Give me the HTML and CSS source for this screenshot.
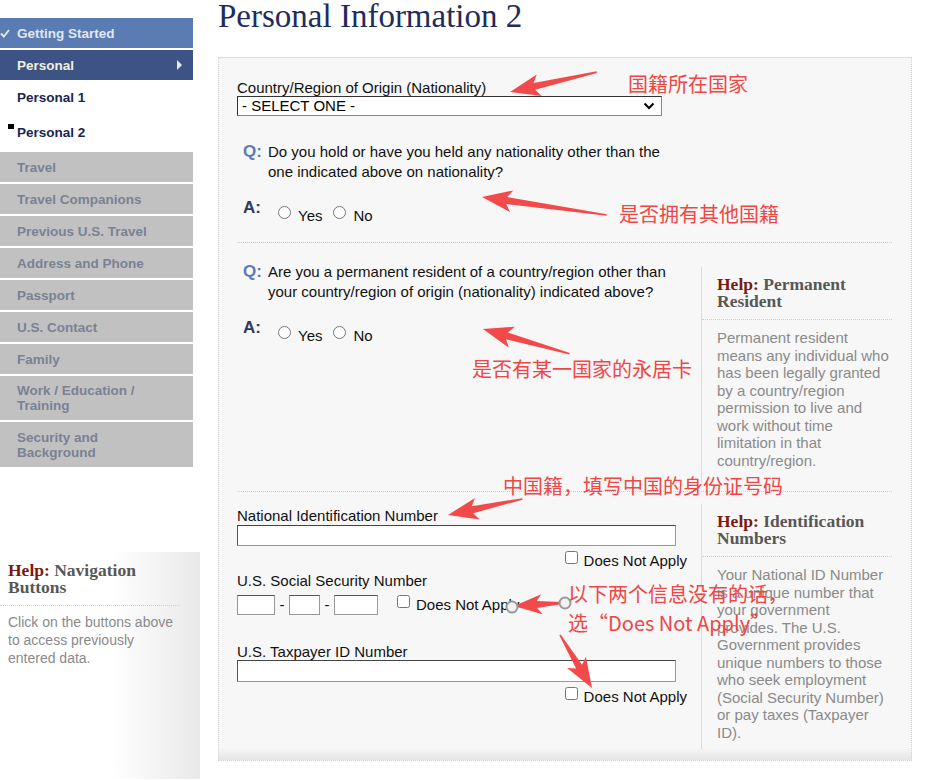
FILE: index.html
```html
<!DOCTYPE html>
<html lang="en">
<head>
    <meta charset="UTF-8">
    <meta name="viewport" content="width=device-width, initial-scale=1.0">
    <title>Personal Information 2</title>
    <link rel="stylesheet" href="styles.css">
</head>
<body>
    <div class="page">
        <aside class="sidebar">
            <ul class="nav">
                <li class="nav-item done">
                    <svg class="check" width="10" height="9" viewBox="0 0 10 9"><path d="M1 4.5 L3.8 7.5 L9 1" /></svg>
                    Getting Started
                </li>
                <li class="nav-item current">Personal<span class="caret"></span></li>
                <li class="sub-item">Personal 1</li>
                <li class="sub-item active">Personal 2</li>
                <li class="nav-item locked">Travel</li>
                <li class="nav-item locked">Travel Companions</li>
                <li class="nav-item locked">Previous U.S. Travel</li>
                <li class="nav-item locked">Address and Phone</li>
                <li class="nav-item locked">Passport</li>
                <li class="nav-item locked">U.S. Contact</li>
                <li class="nav-item locked">Family</li>
                <li class="nav-item locked tall">Work / Education /<br>Training</li>
                <li class="nav-item locked tall">Security and<br>Background</li>
            </ul>

            <div class="help-nav">
                <h3 class="help-title"><span class="help-tag">Help:</span> Navigation Buttons</h3>
                <p class="help-text">Click on the buttons above to access previously entered data.</p>
            </div>
        </aside>

        <main class="main">
            <h1 class="page-title">Personal Information 2</h1>

            <form class="form-box">
                <!-- nationality -->
                <section class="block first">
                    <label class="field-label">Country/Region of Origin (Nationality)</label>
                    <div class="select-wrap">
                        <select class="select-wide"><option>- SELECT ONE -</option></select>
                        <svg class="chevron" width="12" height="8" viewBox="0 0 12 8"><path d="M1.5 1.5 L6 6 L10.5 1.5" /></svg>
                    </div>

                    <div class="q-row"><span class="q-mark">Q:</span><span class="q-text">Do you hold or have you held any nationality other than the one indicated above on nationality?</span></div>
                    <div class="a-row">
                        <span class="a-mark">A:</span>
                        <div class="options">
                            <label class="option"><input type="radio" name="other_nat"><span>Yes</span></label>
                            <label class="option"><input type="radio" name="other_nat"><span>No</span></label>
                        </div>
                    </div>
                </section>

                <!-- permanent resident -->
                <section class="block split second">
                    <div class="fields">
                        <div class="q-row"><span class="q-mark">Q:</span><span class="q-text">Are you a permanent resident of a country/region other than your country/region of origin (nationality) indicated above?</span></div>
                        <div class="a-row">
                            <span class="a-mark">A:</span>
                            <div class="options">
                                <label class="option"><input type="radio" name="perm_res"><span>Yes</span></label>
                                <label class="option"><input type="radio" name="perm_res"><span>No</span></label>
                            </div>
                        </div>
                    </div>
                    <div class="help help-resident">
                        <h3 class="help-title"><span class="help-tag">Help:</span> Permanent Resident</h3>
                        <p class="help-text">Permanent resident means any individual who has been legally granted by a country/region permission to live and work without time limitation in that country/region.</p>
                    </div>
                </section>

                <!-- id numbers -->
                <section class="block split third">
                    <div class="fields id-fields">
                        <label class="field-label">National Identification Number</label>
                        <input class="text-wide" type="text">
                        <label class="na-row"><input type="checkbox"><span>Does Not Apply</span></label>

                        <label class="field-label ssn-label">U.S. Social Security Number</label>
                        <div class="ssn-row">
                            <input class="ssn ssn-1" type="text">
                            <span class="dash">-</span>
                            <input class="ssn ssn-2" type="text">
                            <span class="dash">-</span>
                            <input class="ssn ssn-3" type="text">
                            <label class="na-inline"><input type="checkbox"><span>Does Not Apply</span></label>
                        </div>

                        <label class="field-label tax-label">U.S. Taxpayer ID Number</label>
                        <input class="text-wide tax-input" type="text">
                        <label class="na-row"><input type="checkbox"><span>Does Not Apply</span></label>
                    </div>
                    <div class="help help-ids">
                        <h3 class="help-title"><span class="help-tag">Help:</span> Identification Numbers</h3>
                        <p class="help-text">Your National ID Number is a unique number that your government provides. The U.S. Government provides unique numbers to those who seek employment (Social Security Number) or pay taxes (Taxpayer ID).</p>
                    </div>
                </section>
            </form>
        </main>
    </div>

    <!-- red annotations drawn over the screenshot -->
    <div class="notes">
        <svg class="arrows" width="930" height="780" viewBox="0 0 930 780">
            <line x1="512" y1="607" x2="565" y2="603" stroke="#9a9a9a" stroke-width="2" />
            <g class="arrow" transform="translate(510,92) rotate(-12.9)"><polygon points="0,0 30,-11 25,-3.5 89,-0.8 89,0.8 25,3.5 30,11" /></g>
            <g class="arrow" transform="translate(482,197) rotate(8.2)"><polygon points="0,0 30,-11 25,-3.5 126,-0.8 126,0.8 25,3.5 30,11" /></g>
            <g class="arrow" transform="translate(483,329) rotate(16)"><polygon points="0,0 30,-11 25,-3.5 90,-0.8 90,0.8 25,3.5 30,11" /></g>
            <g class="arrow" transform="translate(448,515) rotate(-12.2)"><polygon points="0,0 30,-11 25,-3.5 76,-0.8 76,0.8 25,3.5 30,11" /></g>
            <g class="arrow" transform="translate(514,606) rotate(-3.6)"><polygon points="0,0 28,-10 23,-3.5 48,-1 48,1 23,3.5 28,10" /></g>
            <g class="arrow" transform="translate(592,688) rotate(-121.1)"><polygon points="0,0 30,-11 25,-3.5 62,-0.8 62,0.8 25,3.5 30,11" /></g>
            <circle cx="512" cy="607" r="5.5" fill="#f3f3f3" stroke="#9a9a9a" stroke-width="2" />
            <circle cx="565" cy="603" r="5.5" fill="#f3f3f3" stroke="#9a9a9a" stroke-width="2" />
        </svg>
        <span class="note note-origin">国籍所在国家</span>
        <span class="note note-other">是否拥有其他国籍</span>
        <span class="note note-resident">是否有某一国家的永居卡</span>
        <span class="note note-id">中国籍，填写中国的身份证号码</span>
        <span class="note note-na1">以下两个信息没有的话，</span>
        <span class="note note-na2">选“Does Not Apply”</span>
    </div>
</body>
</html>
```

FILE: styles.css
```css
body {
    margin: 0;
    background: #fff;
    color: #111;
    font-family: "Liberation Sans", Arial, sans-serif;
    overflow: hidden;
}

.page {
    display: flex;
    width: 930px;
}

/* ---------- left navigation ---------- */

.sidebar {
    width: 200px;
    flex: none;
    padding-top: 18px;
}

.nav {
    list-style: none;
    margin: 0;
    padding: 0;
    width: 193px;
}

.nav-item {
    position: relative;
    box-sizing: border-box;
    height: 30px;
    margin-bottom: 2px;
    padding-left: 17px;
    display: flex;
    align-items: center;
    font: bold 13.5px/15px "Liberation Sans", Arial, sans-serif;
}

.nav-item.tall { height: 44px; }
.nav-item.tall:last-child { height: 45px; margin-bottom: 0; }

.done {
    background: #5b7bb3;
    color: #e2e7f0;
}

.check {
    position: absolute;
    left: 0;
    top: 11px;
}

.check path {
    fill: none;
    stroke: #dfe5ef;
    stroke-width: 2;
}

.current {
    background: #3e5385;
    color: #f3efdc;
    margin-bottom: 0;
}

.caret {
    position: absolute;
    right: 11px;
    top: 10px;
    border-left: 5px solid #e3e7ee;
    border-top: 5px solid transparent;
    border-bottom: 5px solid transparent;
}

.sub-item {
    position: relative;
    height: 35px;
    padding-left: 17px;
    display: flex;
    align-items: center;
    font: bold 13.5px/15px "Liberation Sans", Arial, sans-serif;
    color: #1b2552;
}

.sub-item.active { margin-bottom: 2px; }

.sub-item.active::before {
    content: "";
    position: absolute;
    left: 8px;
    top: 9px;
    width: 6px;
    height: 5px;
    background: #000;
}

.locked {
    background: #c1c1c1;
    color: #7a8195;
}

.help-nav {
    margin-top: 85px;
    height: 227px;
    box-sizing: border-box;
    padding: 10px 0 0 8px;
    background: linear-gradient(to right, #fff 55%, #e9e9e9 100%);
}

.help-nav .help-title {
    width: 172px;
    margin-left: -8px;
    padding-left: 8px;
}

.help-nav .help-text {
    width: 167px;
    margin-top: 7px;
    font-size: 14px;
    line-height: 18px;
}

/* ---------- help boxes ---------- */

.help-title {
    margin: 0;
    padding-bottom: 9px;
    border-bottom: 1px dotted #cfcfcf;
    font: bold 17.5px/17px "Liberation Serif", Georgia, serif;
    color: #575757;
}

.help-tag { color: #7b1a10; }

.help-text {
    margin: 9px 0 0;
    font-size: 15px;
    line-height: 17.5px;
    color: #8a8a8a;
}

.help {
    width: 191px;
    box-sizing: border-box;
    border-left: 1px solid #dcdcdc;
    padding-top: 9px;
}

.help .help-title { padding-left: 15px; }
.help .help-text { padding-left: 15px; }

.help-resident {
    margin-top: 24px;
    padding-bottom: 14px;
}

.help-ids {
    margin-top: 12px;
    padding-bottom: 8px;
}

/* ---------- main column ---------- */

.main {
    margin-left: 18px;
    width: 694px;
}

.page-title {
    margin: 0;
    font: normal 33px/32px "Liberation Serif", Georgia, serif;
    color: #1e2c5b;
}

.form-box {
    margin: 25px 0 0;
    box-sizing: border-box;
    width: 694px;
    padding: 0 19px 0 18px;
    border: 1px dotted #d4d4d4;
    background: linear-gradient(to bottom, #f7f7f7 0, #f7f7f7 calc(100% - 13px), #e5e5e5 100%);
}

.block {
    border-bottom: 1px dotted #cfcfcf;
}

.block.third { border-bottom: none; }

.split {
    display: flex;
    justify-content: space-between;
    align-items: flex-start;
}

.first {
    padding: 22px 0 16px;
}

.second { padding-bottom: 8px; }
.second .fields { padding-top: 19px; }

.third { padding-bottom: 11px; }
.third .fields { padding-top: 16px; }

.field-label {
    display: block;
    font-size: 15px;
    line-height: 16px;
}

.select-wrap {
    position: relative;
    width: 425px;
}

.select-wide {
    display: block;
    box-sizing: border-box;
    width: 425px;
    height: 20px;
    margin: 0;
    padding: 0 4px;
    border: 1px solid #333;
    border-right-color: #888;
    border-bottom-color: #888;
    border-radius: 0;
    background: #fff;
    appearance: none;
    font: 15px/18px "Liberation Sans", Arial, sans-serif;
    color: #000;
}

.chevron {
    position: absolute;
    right: 7px;
    top: 6px;
    pointer-events: none;
}

.chevron path {
    fill: none;
    stroke: #000;
    stroke-width: 2;
}

.q-row {
    display: flex;
    padding-left: 6px;
    font-size: 15px;
    line-height: 20px;
}

.first .q-row { margin-top: 26px; }

.q-mark,
.a-mark {
    width: 25px;
    flex: none;
    font-size: 17px;
    font-weight: bold;
    line-height: 20px;
}

.q-mark { color: #5d7db6; }
.a-mark { color: #2e3b5c; }

.q-text { max-width: 410px; }

.a-row {
    display: flex;
    margin-top: 16px;
    padding-left: 6px;
}

.options {
    display: flex;
    gap: 11px;
    padding: 8px 0 0 10px;
}

.option {
    display: flex;
    align-items: flex-start;
    gap: 7px;
    font-size: 15px;
    line-height: 20px;
}

.option input {
    width: 13px;
    height: 13px;
    margin: 0;
}

/* id fields */

.id-fields { width: 450px; }

.text-wide {
    display: block;
    box-sizing: border-box;
    width: 439px;
    height: 21px;
    margin: 1px 0 0;
    border: 1px solid #999;
    border-top-color: #444;
    border-left-color: #555;
    background: #fff;
}

.tax-input { height: 22px; margin-top: 0; }

.na-row,
.na-inline {
    display: flex;
    align-items: flex-start;
    gap: 6px;
    font-size: 15px;
    line-height: 18px;
}

.na-row {
    justify-content: flex-end;
    margin-top: 5px;
}

.na-row span,
.na-inline span { padding-top: 1px; }

.na-row input,
.na-inline input {
    width: 13px;
    height: 13px;
    margin: 0;
}

.ssn-label { margin-top: 3px; }
.tax-label { margin-top: 29px; }

.ssn-row {
    display: flex;
    align-items: flex-start;
    margin-top: 6px;
}

.ssn {
    box-sizing: border-box;
    height: 20px;
    margin: 0;
    border: 1px solid #999;
    border-top-color: #555;
    background: #fff;
}

.ssn-1 { width: 38px; }
.ssn-2 { width: 31px; }
.ssn-3 { width: 44px; }

.dash {
    width: 14px;
    text-align: center;
    font-size: 15px;
    line-height: 20px;
}

.na-inline { margin-left: 19px; }

/* ---------- annotations ---------- */

.notes {
    position: absolute;
    left: 0;
    top: 0;
    width: 930px;
    height: 780px;
    pointer-events: none;
}

.arrows {
    position: absolute;
    left: 0;
    top: 0;
}

.arrow polygon { fill: #f24a4a; }

.note {
    position: absolute;
    white-space: nowrap;
    font: 20px/24px "Noto Sans CJK SC", sans-serif;
    color: #ef4646;
}

.note-origin { left: 628px; top: 72px; }
.note-other { left: 619px; top: 202px; }
.note-resident { left: 472px; top: 357px; }
.note-id { left: 503px; top: 474px; }
.note-na1 { left: 568px; top: 582px; }
.note-na2 { left: 568px; top: 611px; }
```
